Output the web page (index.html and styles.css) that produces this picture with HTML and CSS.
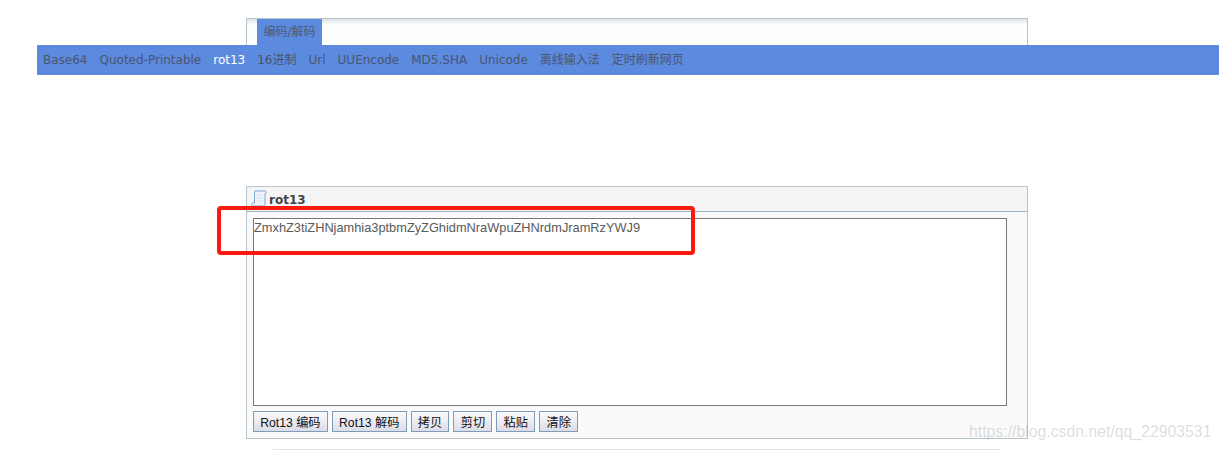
FILE: index.html
```html
<!DOCTYPE html>
<html lang="zh-CN">
<head>
  <meta charset="UTF-8">
  <title>rot13</title>
  <link rel="stylesheet" href="styles.css">
</head>
<body>
  <div class="tabs">
    <div class="tab-active">编码/解码</div>
  </div>

  <div class="nav">
    <a>Base64</a>
    <a>Quoted-Printable</a>
    <a class="current">rot13</a>
    <a>16进制</a>
    <a>Url</a>
    <a>UUEncode</a>
    <a>MD5,SHA</a>
    <a>Unicode</a>
    <a>离线输入法</a>
    <a>定时刷新网页</a>
  </div>

  <div class="panel">
    <div class="panel-head">
      <svg class="panel-icon" width="16" height="18" viewBox="0 0 16 18">
        <path d="M4 1h10c1 0 1.500 .8 1 1.800l-1 .7v11c0 1-.6 1.500-1.500 1.500H2c-1 0-1.500-.8-1.500-1.500s.6-1.500 1.500-1.500h1.500V2c0-.6 0-1 .5-1z" fill="#eef3f9" stroke="#7fa6d6"/>
        <path d="M5.500 5h6M5.500 8h6M5.500 11h6" stroke="#d5e0ee"/>
      </svg>
      <span class="panel-title">rot13</span>
    </div>
    <div class="panel-body">
      <textarea class="code-box">ZmxhZ3tiZHNjamhia3ptbmZyZGhidmNraWpuZHNrdmJramRzYWJ9</textarea>
      <div class="btn-row">
        <button>Rot13 编码</button>
        <button>Rot13 解码</button>
        <button>拷贝</button>
        <button>剪切</button>
        <button>粘贴</button>
        <button>清除</button>
      </div>
    </div>
  </div>

  <div class="foot-line"></div>

  <div class="mark-box"></div>
  <div class="watermark">https://blog.csdn.net/qq_22903531</div>
</body>
</html>
```

FILE: styles.css
```css
html, body {
  height: 450px;
  overflow: hidden;
}
body {
  margin: 0;
  padding-top: 18px;
  box-sizing: border-box;
  background: #fff;
  font-family: "Liberation Sans", "Noto Sans CJK SC", sans-serif;
  position: relative;
}
.tabs {
  width: 782px;
  height: 27px;
  margin-left: 246px;
  box-sizing: border-box;
  padding-left: 10px;
  border: 1px solid #b8c4cc;
  border-bottom: none;
  background: linear-gradient(#dfe4e4, #fcfefe 6px);
}
.tab-active {
  display: inline-block;
  height: 26px;
  padding: 0 6.5px;
  line-height: 27px;
  font-size: 12px;
  color: #4f5a72;
  background: #5c8adf;
  font-family: "DejaVu Sans", "Noto Sans CJK SC", sans-serif;
}
.nav {
  display: flex;
  gap: 12px;
  height: 30px;
  margin-left: 37px;
  padding-left: 6px;
  align-items: baseline;
  line-height: 30px;
  background: #5c8adf;
  font-family: "DejaVu Sans", "Noto Sans CJK SC", sans-serif;
  font-size: 12px;
  color: #4a5570;
}
.nav a {
  height: 30px;
}
.nav .current {
  color: #fff;
  font-weight: 500;
}
.panel {
  width: 782px;
  height: 253px;
  margin: 111px 0 0 246px;
  box-sizing: border-box;
  border: 1px solid #b8c4cc;
  background: #fafafa;
}
.panel-head {
  display: flex;
  align-items: center;
  gap: 2px;
  height: 24px;
  padding-left: 4px;
  background: #f5f5f5;
  border-bottom: 1px solid #9fb0bf;
}
.panel-title {
  padding-top: 1px;
  font-family: "DejaVu Sans", sans-serif;
  font-size: 12px;
  font-weight: bold;
  color: #444;
}
.panel-body {
  padding: 6px 0 0 6px;
}
.code-box {
  display: block;
  width: 754px;
  height: 188px;
  box-sizing: border-box;
  margin: 0;
  padding: 1px 0;
  border: 1px solid #767676;
  background: #fff;
  resize: none;
  font-family: "Liberation Sans", sans-serif;
  font-size: 12.8px;
  line-height: 15px;
  color: #5a5a5a;
}
.btn-row {
  display: flex;
  gap: 4px;
  margin-top: 5px;
}
.btn-row button {
  height: 21px;
  padding: 0 6.25px;
  border: 1px solid #7f9db9;
  background: linear-gradient(#fbfbfd, #dcdce8);
  font-family: "Liberation Sans", "Noto Sans CJK SC", sans-serif;
  font-size: 12.2px;
  color: #111;
}
.foot-line {
  width: 728px;
  margin: 10px 0 0 273px;
  border-top: 1px solid #e4e4e4;
}
.mark-box {
  position: absolute;
  left: 217px;
  top: 206px;
  width: 478px;
  height: 49px;
  box-sizing: border-box;
  border: 4px solid #fb1a10;
  border-radius: 4px;
}
.watermark {
  position: absolute;
  left: 969px;
  top: 423px;
  font-size: 15.8px;
  color: rgba(150, 150, 150, 0.33);
  white-space: nowrap;
}
```
